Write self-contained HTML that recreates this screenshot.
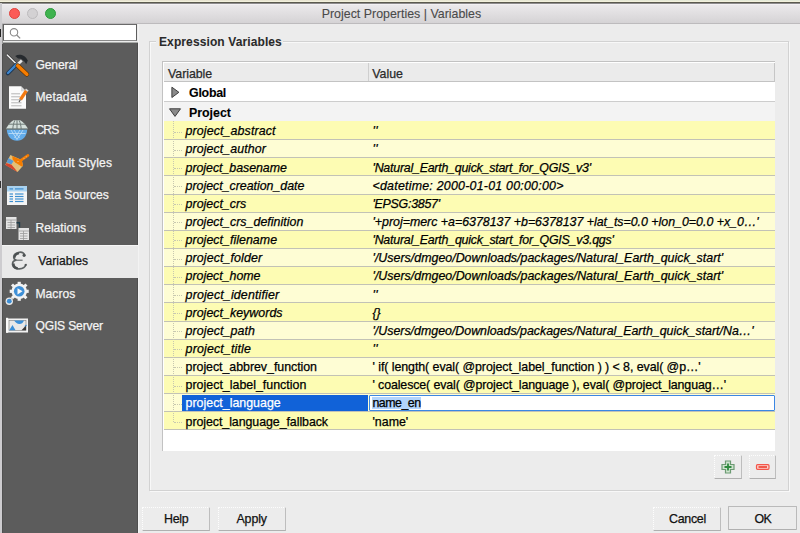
<!DOCTYPE html>
<html><head><meta charset="utf-8"><style>
*{box-sizing:border-box;margin:0;padding:0}
html,body{width:800px;height:533px;overflow:hidden;background:#ececec;font-family:"Liberation Sans",sans-serif;font-size:12.4px;color:#000}
div,span,svg{position:absolute}
.t{white-space:pre;line-height:14px;-webkit-text-stroke:0.25px currentColor}
.si{color:#f4f4f4;font-size:12.1px}
.b{-webkit-text-stroke:0}
.row{left:164px;width:611px;height:18.2px}
.bd{left:164px;width:611px;height:1px;background:#c2c2b6}
.btn{background:#ececec;border-top:1px dotted #fdfdfd;border-left:1px dotted #fdfdfd;border-right:1px solid #bdbdbd;border-bottom:1.4px solid #b0b0b0}
</style></head><body>
<div style="left:0;top:0;width:800px;height:3px;background:linear-gradient(90deg,#e6e1cf,#e9e6d2 50%,#e4ead8)"></div>
<div style="left:0;top:1px;width:800px;height:1px;background:#f2f0dc"></div><div style="left:0;top:2px;width:800px;height:1px;background:#5b5a4e"></div><div style="left:0;top:3px;width:800px;height:1px;background:#8e8c8e"></div>
<div style="left:0;top:3px;width:1.6px;height:530px;background:#cdcccf"></div>
<div style="left:0;top:28.5px;width:1.3px;height:8.5px;background:#222"></div>
<div style="left:0;top:181px;width:1.3px;height:7px;background:#333"></div>
<div style="left:2px;top:4px;width:798px;height:20px;background:linear-gradient(#ebe9eb,#d5d3d5);border-top:1px solid #f3f1f3;border-bottom:1px solid #bdbbbd"></div>
<div class="t" style="left:321.7px;top:6.6px;font-size:12.4px;color:#4a4a4a;-webkit-text-stroke:0.1px;letter-spacing:0.006px">Project Properties | Variables</div>
<div style="left:8.6px;top:7.5px;width:11.3px;height:11.3px;border-radius:50%;background:#fc5b57;border:0.6px solid #e0443e"></div>
<div style="left:26.7px;top:7.5px;width:11.3px;height:11.3px;border-radius:50%;background:#d3d1d3;border:0.8px solid #bdbbbd"></div>
<div style="left:44.9px;top:7.5px;width:11.3px;height:11.3px;border-radius:50%;background:#3fb34f;border:0.6px solid #2f9a3e"></div>
<div style="left:1.6px;top:43.4px;width:136px;height:490px;background:#5c5c5c;border-left:1px solid #505050;border-right:0.6px solid #4e4e4e"></div>
<div style="left:137.6px;top:24px;width:1px;height:509px;background:#f3f3f3"></div>
<div style="left:2px;top:24px;width:1px;height:20px;background:#9a9a9a"></div>
<div style="left:2.5px;top:24.2px;width:134.5px;height:17.3px;background:#fff;border:1px solid #5e5e5e;border-top-color:#6a6a6a;border-bottom-color:#8a8a8a"></div>
<div style="left:2.5px;top:41.5px;width:135px;height:1.9px;background:#a9aba9"></div>
<svg style="left:8px;top:27px" width="16" height="14" viewBox="0 0 16 14"><circle cx="6" cy="5.3" r="3.7" fill="none" stroke="#8a8a8a" stroke-width="1.1"/><line x1="8.7" y1="8" x2="12.2" y2="11.4" stroke="#8a8a8a" stroke-width="1.3"/></svg>
<div style="left:2px;top:245.3px;width:135.5px;height:32.8px;background:#e9e9e9;border-top:1px solid #f6f6f6"></div>
<div class="t si" style="left:35.4px;top:57.60px;color:#f4f4f4;letter-spacing:-0.119px">General</div>
<div class="t si" style="left:35.4px;top:90.40px;color:#f4f4f4;letter-spacing:0.133px">Metadata</div>
<div class="t si" style="left:35.4px;top:123.00px;color:#f4f4f4;letter-spacing:-0.816px">CRS</div>
<div class="t si" style="left:35.4px;top:155.50px;color:#f4f4f4;letter-spacing:0.148px">Default Styles</div>
<div class="t si" style="left:35.4px;top:188.00px;color:#f4f4f4;letter-spacing:0.01px">Data Sources</div>
<div class="t si" style="left:35.4px;top:221.20px;color:#f4f4f4;letter-spacing:0.02px">Relations</div>
<div class="t si" style="left:38.2px;top:253.60px;color:#161616;letter-spacing:0.052px">Variables</div>
<div class="t si" style="left:35.4px;top:286.60px;color:#f4f4f4;letter-spacing:0.057px">Macros</div>
<div class="t si" style="left:35.4px;top:319.10px;color:#f4f4f4;letter-spacing:-0.158px">QGIS Server</div>
<svg style="left:2px;top:48px" width="32" height="32" viewBox="0 0 32 32">
<line x1="5.2" y1="7" x2="14.3" y2="16" stroke="#3a3a3a" stroke-width="2.6" stroke-linecap="round"/>
<line x1="5.2" y1="7" x2="14.3" y2="16" stroke="#f2f2f2" stroke-width="1.4" stroke-linecap="round"/>
<line x1="14" y1="17" x2="5.8" y2="25.3" stroke="#1d3550" stroke-width="4" stroke-linecap="round"/>
<line x1="13.8" y1="17.2" x2="6" y2="25" stroke="#3d86cf" stroke-width="2.4" stroke-linecap="round"/>
<path d="M13.2 8 C17 5.8 22.5 6.2 25.8 12.5 L24.2 16.2 C22.2 12.5 19.5 10.5 16 10.6 Z" fill="#262a2e"/>
<line x1="19.8" y1="12.5" x2="15" y2="17" stroke="#e8e8e8" stroke-width="2.6"/>
<line x1="15.8" y1="17.8" x2="24.8" y2="26.2" stroke="#5a3000" stroke-width="4.6" stroke-linecap="round"/>
<line x1="15.8" y1="17.8" x2="24.8" y2="26.2" stroke="#f57c00" stroke-width="3.6" stroke-linecap="round"/>
</svg>
<svg style="left:2px;top:82px" width="32" height="32" viewBox="0 0 32 32">
<path d="M7 4.2 H19 L24 9.2 V26.7 H7 Z" fill="#fbfbfb"/>
<path d="M19 4.2 V9.2 H24 Z" fill="#d9d9d9"/>
<g stroke="#b5b5b5" stroke-width="1"><line x1="9.2" y1="11.8" x2="18" y2="11.8"/><line x1="9.2" y1="14.8" x2="18" y2="14.8"/><line x1="9.2" y1="17.8" x2="18" y2="17.8"/><line x1="9.2" y1="20.8" x2="19.5" y2="20.8"/><line x1="9.2" y1="23.8" x2="19.5" y2="23.8"/></g>
<line x1="24.5" y1="8.5" x2="18.5" y2="17.5" stroke="#f47a10" stroke-width="3.2"/>
<line x1="25.3" y1="7.5" x2="24.4" y2="8.8" stroke="#d8d8d8" stroke-width="3.2"/>
<line x1="18.5" y1="17.5" x2="17" y2="20" stroke="#555" stroke-width="1.2"/>
</svg>
<svg style="left:2px;top:114px" width="32" height="32" viewBox="0 0 32 32">
<path d="M3.9 14.8 C6 11 8.5 8 11.4 6.2 H18.2 C21.2 8 24 11 26.1 14.8 Z" fill="#d5e0dc"/>
<path d="M4.8 15.4 H25.2 C25 22 20.8 26.7 15 26.7 C9.2 26.7 5 22 4.8 15.4 Z" fill="#62aceb"/>
<g stroke="#6f7a78" stroke-width="1" fill="none"><line x1="7" y1="10.2" x2="23" y2="10.2"/><line x1="3.9" y1="15" x2="26.1" y2="15"/><path d="M12.8 6.4 C11.6 9 11 12 10.8 15"/><path d="M15 6.2 V15"/><path d="M17.2 6.4 C18.4 9 19 12 19.2 15"/></g>
<g stroke="#c3e0f7" stroke-width="0.8" fill="none"><path d="M6.5 19.5 H23.5"/><path d="M9 16 L15 25.5 L21 16"/><path d="M12 16 L17.5 24"/><path d="M18 16 L12.5 24"/></g>
</svg>
<svg style="left:2px;top:146px" width="32" height="32" viewBox="0 0 32 32">
<path d="M8.4 9 L19.8 14.1 L21 19.8 L15.6 26.1 L3.3 18.8 Z" fill="#e2c07a"/>
<path d="M10.2 10 L19.8 14.1 L21 19.8 L19.6 20.6 L13.2 16.4 L10.6 13.6 Z" fill="#f57c00"/>
<path d="M6.4 12 L11.6 15 L9.4 18.5 L4.7 16.6 Z" fill="#5a9ad6"/>
<path d="M4.5 17 L9.6 18.8 L15.6 26 L3.3 19 Z" fill="#d9432c"/>
<line x1="19.5" y1="13.8" x2="26" y2="9.4" stroke="#f57c00" stroke-width="2.6" stroke-linecap="round"/>
<g fill="#f2c9a0"><circle cx="22" cy="12.2" r="0.5"/><circle cx="24.2" cy="10.7" r="0.5"/><circle cx="16" cy="15.5" r="0.6"/><circle cx="17.5" cy="22" r="0.6"/></g>
</svg>
<svg style="left:2px;top:179px" width="32" height="32" viewBox="0 0 32 32">
<rect x="5" y="7" width="20" height="19" fill="#f4f4f4"/>
<rect x="5" y="7" width="20" height="5.5" fill="#a9d2f0"/>
<g stroke="#3d8fd0" stroke-width="1.2"><line x1="7.5" y1="9.9" x2="11" y2="9.9"/><line x1="13" y1="9.9" x2="21.5" y2="9.9"/><line x1="7.5" y1="15" x2="11" y2="15"/><line x1="13" y1="15" x2="21.5" y2="15"/><line x1="7.5" y1="17.5" x2="11" y2="17.5"/><line x1="13" y1="17.5" x2="21.5" y2="17.5"/><line x1="7.5" y1="20" x2="11" y2="20"/><line x1="13" y1="20" x2="21.5" y2="20"/><line x1="7.5" y1="22.5" x2="11" y2="22.5"/><line x1="13" y1="22.5" x2="21.5" y2="22.5"/></g>
</svg>
<svg style="left:2px;top:212px" width="32" height="32" viewBox="0 0 32 32">
<rect x="4" y="5" width="10.5" height="12" fill="#e4e4e4"/>
<rect x="16.5" y="16" width="10.5" height="12" fill="#e4e4e4"/>
<g stroke="#9a9a9a" stroke-width="0.8"><line x1="4" y1="8" x2="14.5" y2="8"/><line x1="5.5" y1="10.5" x2="13" y2="10.5"/><line x1="5.5" y1="13" x2="13" y2="13"/><line x1="5.5" y1="15.5" x2="13" y2="15.5"/><line x1="9" y1="8" x2="9" y2="17"/>
<line x1="16.5" y1="19" x2="27" y2="19"/><line x1="18" y1="21.5" x2="25.5" y2="21.5"/><line x1="18" y1="24" x2="25.5" y2="24"/><line x1="18" y1="26.5" x2="25.5" y2="26.5"/><line x1="21.5" y1="19" x2="21.5" y2="28"/></g>
<path d="M14.5 10.8 H17.5 V15.5" fill="none" stroke="#1f3c4a" stroke-width="1.4"/>
</svg>
<svg style="left:2px;top:244px" width="32" height="32" viewBox="0 0 32 32">
<path d="M22.6 11.2 C21.8 8.6 19.6 8 17.2 8.3 C13.5 8.8 11.5 11 11.8 13.3 C12 15 13.3 16 14.5 16.2 C11.6 16.6 10.3 18.6 10.6 20.8 C11 23.8 14 25.2 17.3 24.9 C20.8 24.6 23.3 22.8 23.9 20.6" fill="none" stroke="#5d6263" stroke-width="1.7" stroke-linecap="round"/>
<path d="M14.3 16.2 H20.6" stroke="#5d6263" stroke-width="1.1"/>
<circle cx="22.1" cy="11.3" r="1.6" fill="#4f5455"/>
<circle cx="23.6" cy="21" r="1.1" fill="#4f5455"/>
<path d="M12.6 13.8 C12.6 11.5 14.5 9.6 17 9.2" fill="none" stroke="#4a4f50" stroke-width="2"/>
<path d="M11.6 19.5 C11.4 22 13 24 15.8 24.3" fill="none" stroke="#4a4f50" stroke-width="2.2"/>
</svg>
<svg style="left:2px;top:277px" width="32" height="32" viewBox="0 0 32 32">
<circle cx="17.2" cy="14.3" r="7.8" fill="#f2f2f2"/>
<g fill="#f2f2f2"><rect x="15.6" y="4.8" width="3.2" height="3"/><rect x="15.6" y="20.8" width="3.2" height="3"/><rect x="7.7" y="12.7" width="3" height="3.2"/><rect x="23.7" y="12.7" width="3" height="3.2"/>
<rect x="9.5" y="7" width="3" height="3" transform="rotate(45 11 8.5)"/><rect x="21.9" y="7" width="3" height="3" transform="rotate(45 23.4 8.5)"/><rect x="9.5" y="18.7" width="3" height="3" transform="rotate(45 11 20.2)"/><rect x="21.9" y="18.7" width="3" height="3" transform="rotate(45 23.4 20.2)"/></g>
<circle cx="17.2" cy="14.3" r="5.3" fill="#3e8fd6"/>
<path d="M15.5 11.2 L20.5 14.3 L15.5 17.4 Z" fill="#f8f8f8"/>
<circle cx="7.3" cy="24.2" r="3.7" fill="#e8e8e8"/>
<circle cx="7.3" cy="24.2" r="2.4" fill="#3e8fd6"/>
</svg>
<svg style="left:2px;top:310px" width="32" height="32" viewBox="0 0 32 32">
<rect x="4.2" y="8.5" width="21.8" height="14" fill="#f2f2f2"/>
<rect x="4" y="7.8" width="2.2" height="15" fill="#fafafa"/>
<rect x="7" y="10.5" width="17" height="10" fill="#e8e8e8" stroke="#7a7a7a" stroke-width="0.6"/>
<path d="M12 10.5 H22 C21 13 19.5 14 17.5 14 C15 14 14 12.5 12 10.5 Z" fill="#3a8fd8"/>
<path d="M7.2 20.3 L10.5 15 L13.5 20.3 Z" fill="#3a8fd8"/>
<path d="M19.5 20.3 L24 15.5 L24 20.3 Z" fill="#3a3a3a"/>
<path d="M22 16.5 L24 14.5 L25 16" fill="#3a8fd8"/>
</svg>
<div style="left:150px;top:42px;width:640px;height:450px;border:1px solid #f8f8f8"></div>
<div style="left:149px;top:41px;width:640px;height:450px;border:1px solid #d2d2d2"></div>
<div style="left:155.5px;top:34px;width:127.5px;height:14px;background:#ececec"></div>
<div class="t" style="left:159px;top:34.7px;font-size:12px;font-weight:bold;color:#2a2a2a;-webkit-text-stroke:0.05px;letter-spacing:0.108px">Expression Variables</div>
<div style="left:162.4px;top:61px;width:613px;height:390px;background:#fff;border-top:1.6px solid #c2c2c2;border-left:1.6px solid #c2c2c2"></div>
<div style="left:164px;top:62.9px;width:611.4px;height:18.7px;background:#ebebeb;border-right:1px solid #c6c6c6;border-bottom:1px solid #c3c3c3"></div>
<div style="left:368px;top:62.9px;width:1px;height:18px;background:#cfcfcf"></div>
<div class="t" style="left:168.1px;top:67px;color:#2a2a2a;letter-spacing:-0.081px">Variable</div>
<div class="t" style="left:372.2px;top:67px;color:#2a2a2a">Value</div>
<div style="left:164px;top:81.6px;width:611px;height:20px;background:#fff;border-bottom:1px solid #cdcdcd"></div>
<div style="left:164px;top:101.6px;width:611px;height:20.2px;background:#f3f3f3;border-bottom:1px solid #c9c9c9"></div>
<svg style="left:169px;top:86px" width="14" height="14" viewBox="0 0 14 14"><path d="M2.9 1.2 L9.9 6.3 L2.9 11.5 Z" fill="#8a8a8a" stroke="#3e3e3e" stroke-width="1" stroke-linejoin="round"/></svg>
<svg style="left:168px;top:107px" width="14" height="14" viewBox="0 0 14 14"><path d="M1.5 1.8 L12.5 1.8 L7 9.4 Z" fill="#8a8a8a" stroke="#3e3e3e" stroke-width="1" stroke-linejoin="round"/></svg>
<div class="t" style="left:189.1px;top:85.6px;font-weight:bold;-webkit-text-stroke:0.1px;letter-spacing:-0.277px">Global</div>
<div class="t" style="left:189px;top:105.5px;font-weight:bold;-webkit-text-stroke:0.1px;letter-spacing:-0.017px">Project</div>
<div class="row" style="top:121.40px;background:#fdfcb3"></div>
<div class="row" style="top:139.55px;background:#fefdd4"></div>
<div class="row" style="top:157.70px;background:#fdfcb3"></div>
<div class="row" style="top:175.85px;background:#fefdd4"></div>
<div class="row" style="top:194.00px;background:#fdfcb3"></div>
<div class="row" style="top:212.15px;background:#fefdd4"></div>
<div class="row" style="top:230.30px;background:#fdfcb3"></div>
<div class="row" style="top:248.45px;background:#fefdd4"></div>
<div class="row" style="top:266.60px;background:#fdfcb3"></div>
<div class="row" style="top:284.75px;background:#fefdd4"></div>
<div class="row" style="top:302.90px;background:#fdfcb3"></div>
<div class="row" style="top:321.05px;background:#fefdd4"></div>
<div class="row" style="top:339.20px;background:#fdfcb3"></div>
<div class="row" style="top:357.35px;background:#fefdd4"></div>
<div class="row" style="top:375.50px;background:#fdfcb3"></div>
<div class="row" style="top:393.65px;background:#fefdd4"></div>
<div class="row" style="top:411.80px;background:#fdfcb3"></div>
<div class="bd" style="top:139.05px"></div>
<div class="bd" style="top:157.20px"></div>
<div class="bd" style="top:175.35px"></div>
<div class="bd" style="top:193.50px"></div>
<div class="bd" style="top:211.65px"></div>
<div class="bd" style="top:229.80px"></div>
<div class="bd" style="top:247.95px"></div>
<div class="bd" style="top:266.10px"></div>
<div class="bd" style="top:284.25px"></div>
<div class="bd" style="top:302.40px"></div>
<div class="bd" style="top:320.55px"></div>
<div class="bd" style="top:338.70px"></div>
<div class="bd" style="top:356.85px"></div>
<div class="bd" style="top:375.00px"></div>
<div class="bd" style="top:393.15px"></div>
<div class="bd" style="top:411.30px"></div>
<div class="bd" style="top:429.45px"></div>
<div class="t" style="left:185.6px;top:124.20px;font-style:italic;letter-spacing:0.115px">project_abstract</div>
<div class="t" style="left:372.5px;top:124.20px;font-style:italic;letter-spacing:0.383px">&#x27;&#x27;</div>
<div style="left:174px;top:131.50px;width:8px;height:0;border-top:1px dotted #c8c8b0"></div>
<div class="t" style="left:185.6px;top:142.35px;font-style:italic;letter-spacing:0.077px">project_author</div>
<div class="t" style="left:372.5px;top:142.35px;font-style:italic;letter-spacing:0.383px">&#x27;&#x27;</div>
<div style="left:174px;top:149.65px;width:8px;height:0;border-top:1px dotted #c8c8b0"></div>
<div class="t" style="left:185.6px;top:160.50px;font-style:italic;letter-spacing:-0.047px">project_basename</div>
<div class="t" style="left:372.5px;top:160.50px;font-style:italic;letter-spacing:-0.228px">&#x27;Natural_Earth_quick_start_for_QGIS_v3&#x27;</div>
<div style="left:174px;top:167.80px;width:8px;height:0;border-top:1px dotted #c8c8b0"></div>
<div class="t" style="left:185.6px;top:178.65px;font-style:italic;letter-spacing:-0.018px">project_creation_date</div>
<div class="t" style="left:372.5px;top:178.65px;font-style:italic;letter-spacing:0.231px">&lt;datetime: 2000-01-01 00:00:00&gt;</div>
<div style="left:174px;top:185.95px;width:8px;height:0;border-top:1px dotted #c8c8b0"></div>
<div class="t" style="left:185.6px;top:196.80px;font-style:italic;letter-spacing:0.008px">project_crs</div>
<div class="t" style="left:372.5px;top:196.80px;font-style:italic;letter-spacing:-0.261px">&#x27;EPSG:3857&#x27;</div>
<div style="left:174px;top:204.10px;width:8px;height:0;border-top:1px dotted #c8c8b0"></div>
<div class="t" style="left:185.6px;top:214.95px;font-style:italic;letter-spacing:0.032px">project_crs_definition</div>
<div class="t" style="left:372.5px;top:214.95px;font-style:italic;letter-spacing:-0.01px">&#x27;+proj=merc +a=6378137 +b=6378137 +lat_ts=0.0 +lon_0=0.0 +x_0…&#x27;</div>
<div style="left:174px;top:222.25px;width:8px;height:0;border-top:1px dotted #c8c8b0"></div>
<div class="t" style="left:185.6px;top:233.10px;font-style:italic;letter-spacing:0.036px">project_filename</div>
<div class="t" style="left:372.5px;top:233.10px;font-style:italic;letter-spacing:-0.221px">&#x27;Natural_Earth_quick_start_for_QGIS_v3.qgs&#x27;</div>
<div style="left:174px;top:240.40px;width:8px;height:0;border-top:1px dotted #c8c8b0"></div>
<div class="t" style="left:185.6px;top:251.25px;font-style:italic;letter-spacing:0.109px">project_folder</div>
<div class="t" style="left:372.5px;top:251.25px;font-style:italic;letter-spacing:0.015px">&#x27;/Users/dmgeo/Downloads/packages/Natural_Earth_quick_start&#x27;</div>
<div style="left:174px;top:258.55px;width:8px;height:0;border-top:1px dotted #c8c8b0"></div>
<div class="t" style="left:185.6px;top:269.40px;font-style:italic;letter-spacing:-0.015px">project_home</div>
<div class="t" style="left:372.5px;top:269.40px;font-style:italic;letter-spacing:0.015px">&#x27;/Users/dmgeo/Downloads/packages/Natural_Earth_quick_start&#x27;</div>
<div style="left:174px;top:276.70px;width:8px;height:0;border-top:1px dotted #c8c8b0"></div>
<div class="t" style="left:185.6px;top:287.55px;font-style:italic;letter-spacing:0.154px">project_identifier</div>
<div class="t" style="left:372.5px;top:287.55px;font-style:italic;letter-spacing:0.383px">&#x27;&#x27;</div>
<div style="left:174px;top:294.85px;width:8px;height:0;border-top:1px dotted #c8c8b0"></div>
<div class="t" style="left:185.6px;top:305.70px;font-style:italic;letter-spacing:0.036px">project_keywords</div>
<div class="t" style="left:372.5px;top:305.70px;font-style:italic;letter-spacing:-0.141px">{}</div>
<div style="left:174px;top:313.00px;width:8px;height:0;border-top:1px dotted #c8c8b0"></div>
<div class="t" style="left:185.6px;top:323.85px;font-style:italic;letter-spacing:0.1px">project_path</div>
<div class="t" style="left:372.5px;top:323.85px;font-style:italic;letter-spacing:-0.007px">&#x27;/Users/dmgeo/Downloads/packages/Natural_Earth_quick_start/Na…&#x27;</div>
<div style="left:174px;top:331.15px;width:8px;height:0;border-top:1px dotted #c8c8b0"></div>
<div class="t" style="left:185.6px;top:342.00px;font-style:italic;letter-spacing:0.163px">project_title</div>
<div class="t" style="left:372.5px;top:342.00px;font-style:italic;letter-spacing:0.383px">&#x27;&#x27;</div>
<div style="left:174px;top:349.30px;width:8px;height:0;border-top:1px dotted #c8c8b0"></div>
<div class="t" style="left:185.6px;top:360.15px;letter-spacing:-0.038px">project_abbrev_function</div>
<div class="t" style="left:372.5px;top:360.15px;letter-spacing:-0.06px">&#x27; if( length( eval( @project_label_function ) ) &lt; 8, eval( @p…&#x27;</div>
<div style="left:174px;top:367.45px;width:8px;height:0;border-top:1px dotted #c8c8b0"></div>
<div class="t" style="left:185.6px;top:378.30px;letter-spacing:0.006px">project_label_function</div>
<div class="t" style="left:372.5px;top:378.30px;letter-spacing:-0.111px">&#x27; coalesce( eval( @project_language ), eval( @project_languag…&#x27;</div>
<div style="left:174px;top:385.60px;width:8px;height:0;border-top:1px dotted #c8c8b0"></div>
<div style="left:182px;top:394.75px;width:186px;height:16.6px;background:#1162d8"></div>
<div class="t" style="left:185.6px;top:396.45px;color:#fff;letter-spacing:0px">project_language</div>
<div style="left:369px;top:394.65px;width:406px;height:16.5px;background:#fff;border:1.6px solid #3b87e3;border-radius:1px"></div>
<div style="left:372px;top:396.55px;width:49px;height:12.6px;background:#b3d5fd"></div>
<div class="t" style="left:372.5px;top:396.45px;color:#000;letter-spacing:-0.525px">name_en</div>
<div style="left:174px;top:403.75px;width:8px;height:0;border-top:1px dotted #c8c8b0"></div>
<div class="t" style="left:185.6px;top:414.60px;letter-spacing:-0.063px">project_language_fallback</div>
<div class="t" style="left:372.5px;top:414.60px;letter-spacing:0px">&#x27;name&#x27;</div>
<div style="left:174px;top:421.90px;width:8px;height:0;border-top:1px dotted #c8c8b0"></div>
<div style="left:173px;top:121.40px;width:0;height:301.00px;border-left:1px dotted #c8c8b0"></div>
<div class="btn" style="left:714.3px;top:455.3px;width:27.4px;height:23.3px"></div>
<div class="btn" style="left:748.8px;top:455.3px;width:27.4px;height:23.3px"></div>
<svg style="left:720px;top:459px" width="16" height="16" viewBox="0 0 16 16"><path d="M5.5 2 H10.5 V5.5 H14 V10.5 H10.5 V14 H5.5 V10.5 H2 V5.5 H5.5 Z" fill="#cfe3cf" stroke="#6d9b74" stroke-width="1.2"/><path d="M8 4.5 V11.5 M4.5 8 H11.5" stroke="#2e8b3e" stroke-width="1.8"/></svg>
<svg style="left:754px;top:459px" width="18" height="16" viewBox="0 0 18 16"><rect x="2.5" y="5.7" width="12.5" height="4.6" rx="1" fill="#fbd3cf" stroke="#f4564a" stroke-width="1.2"/><line x1="4.5" y1="8" x2="13" y2="8" stroke="#f05a4d" stroke-width="2"/></svg>
<div class="btn" style="left:142px;top:507px;width:68.4px;height:23.6px"></div>
<div class="t" style="left:164px;top:512.1px;color:#111;letter-spacing:-0.271px">Help</div>
<div class="btn" style="left:217.6px;top:507px;width:68.4px;height:23.6px"></div>
<div class="t" style="left:236.4px;top:512.1px;color:#111;letter-spacing:-0.08px">Apply</div>
<div class="btn" style="left:653px;top:507px;width:68.4px;height:23.6px"></div>
<div class="t" style="left:669px;top:512.1px;color:#111;letter-spacing:-0.263px">Cancel</div>
<div style="left:728px;top:506.3px;width:69px;height:24.2px;background:#ececec;border:1.2px solid #bababa;border-bottom:1.4px solid #b0b0b0;border-radius:1px"></div>
<div class="t" style="left:754.6px;top:512.1px;color:#111;letter-spacing:-0.753px">OK</div>
</body></html>
